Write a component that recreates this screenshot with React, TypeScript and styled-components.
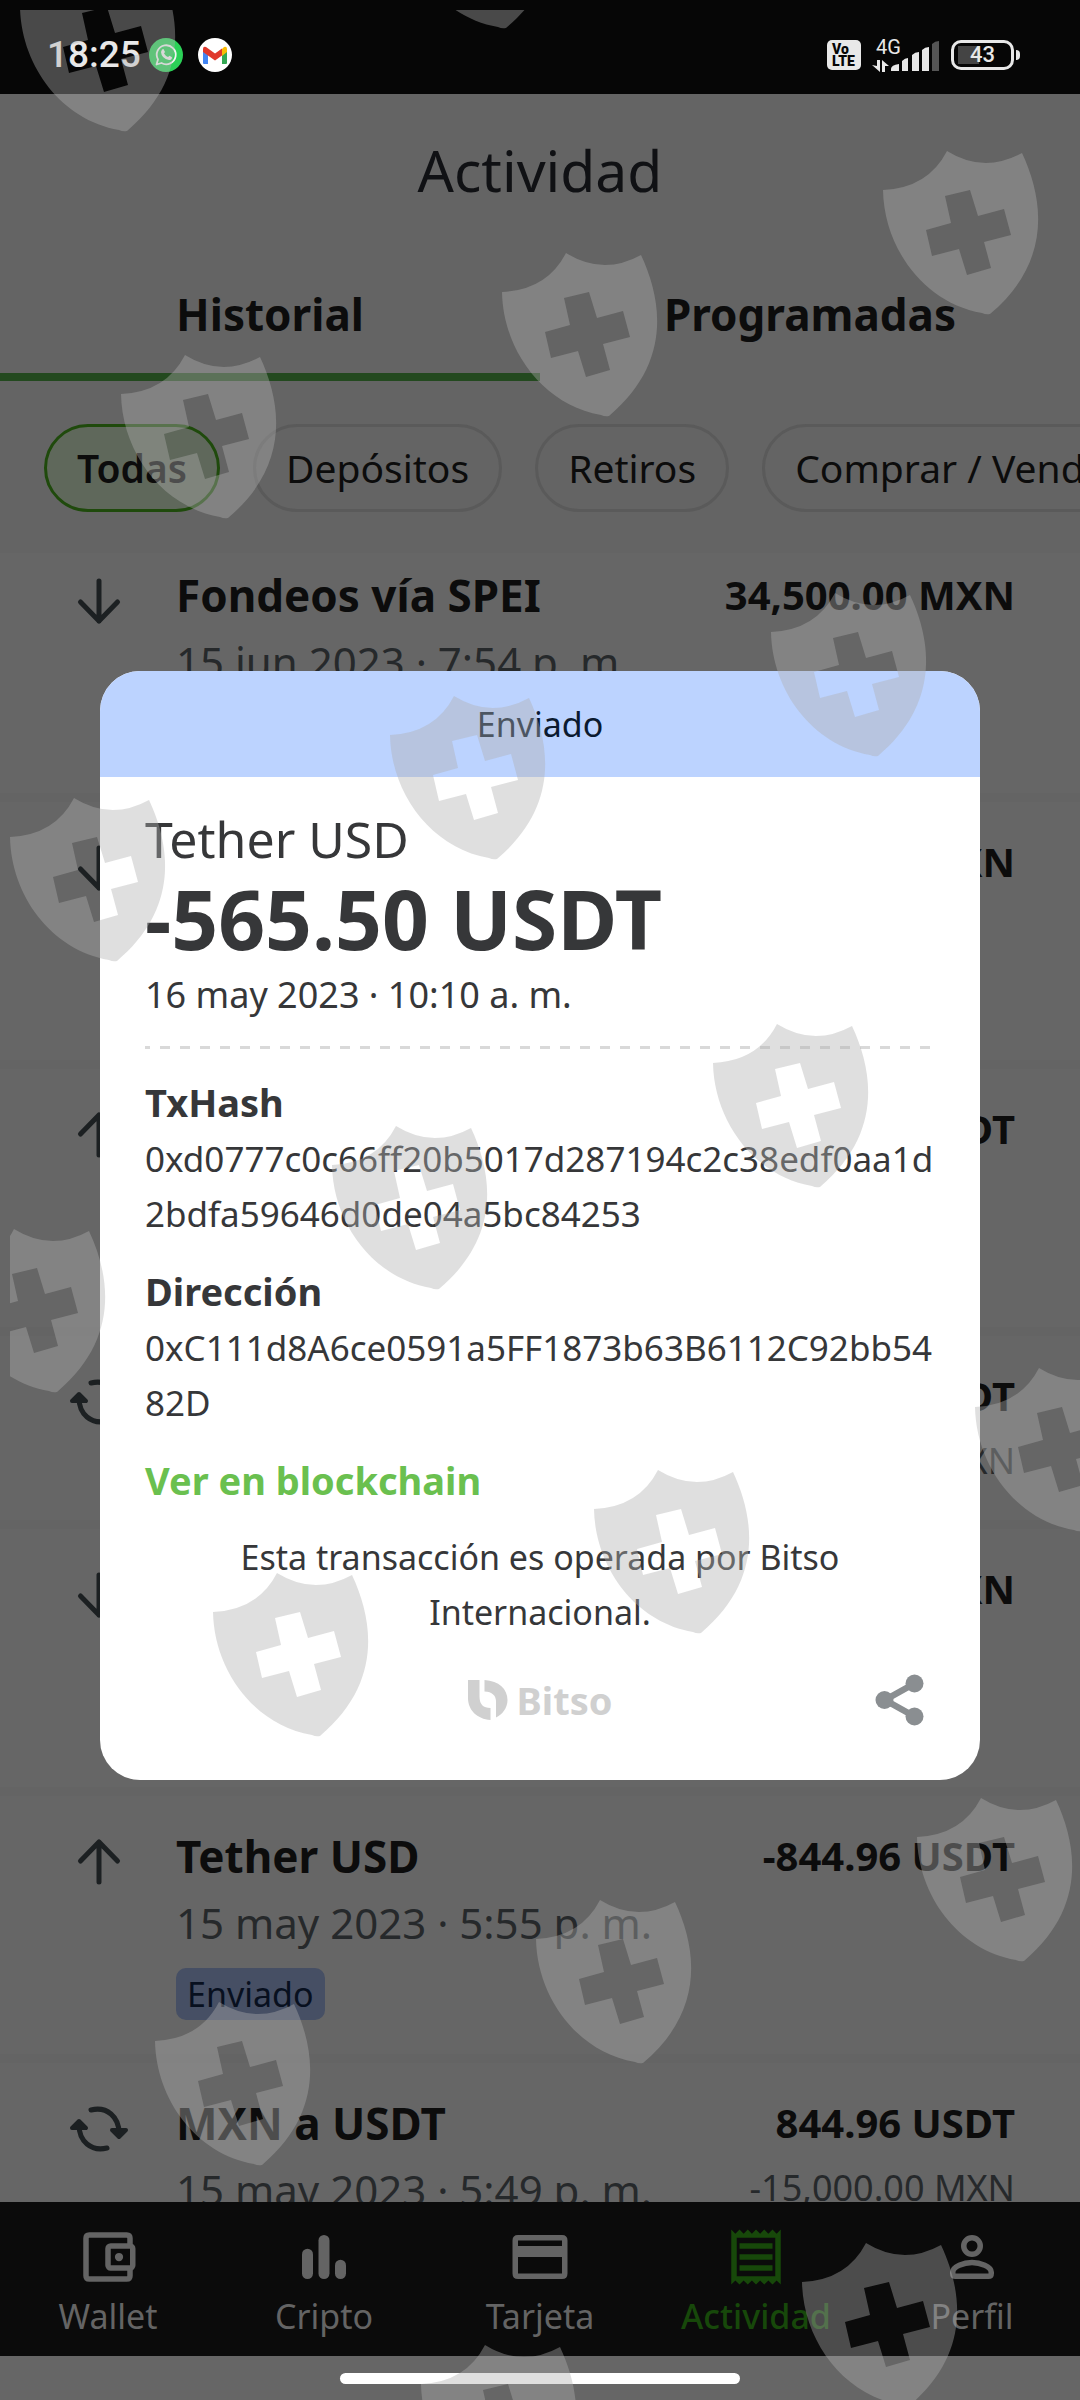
import React from "react";
import styled, { createGlobalStyle } from "styled-components";

const Global = createGlobalStyle`
  *, *::before, *::after { box-sizing: border-box; }
  body { margin: 0; background: #666; font-family: "Noto Sans", "Open Sans", sans-serif; }
  button { font: inherit; color: inherit; background: none; border: 0; padding: 0; margin: 0; }
  ul, dl, dd, p, h1, h2 { margin: 0; padding: 0; list-style: none; }
`;

const Screen = styled.div`
  position: relative;
  display: flex;
  flex-direction: column;
  height: 100vh;
  overflow: hidden;
  background: #666;
  color: #0c0c0c;
`;

const StatusBar = styled.header`
  display: flex;
  align-items: center;
  justify-content: space-between;
  flex: none;
  height: 94px;
  padding: 16px 60px 0 47px;
  background: #060606;
  color: #e8e8e8;
  font-family: Roboto, sans-serif;
`;

const StatusGroup = styled.div<{ $gap: number }>`
  display: flex;
  align-items: center;
  gap: ${(p) => p.$gap}px;
`;

const Clock = styled.time`
  font-size: 37px;
  font-weight: 500;
  line-height: 40px;
`;

const VolteBadge = styled.span`
  display: grid;
  align-content: center;
  width: 34px;
  height: 30px;
  padding-left: 5px;
  border-radius: 5px;
  background: #e8e8e8;
  color: #060606;
  font-size: 14px;
  font-weight: 900;
  line-height: 12px;
`;

const Network = styled.span`
  display: grid;
  grid-template-columns: 18px 50px;
  align-items: end;
  height: 36px;
`;

const NetworkLabel = styled.span`
  grid-column: 1 / 3;
  grid-row: 1;
  align-self: start;
  padding-left: 4px;
  font-size: 20px;
  line-height: 20px;
`;

const NetworkDrawing = styled.svg`
  grid-column: 1 / 3;
  grid-row: 1;
  width: 68px;
  height: 32px;
`;

const Battery = styled.span`
  position: relative;
  display: grid;
  place-items: center;
  width: 63px;
  height: 30px;
  margin-right: 6px;
  border: 3px solid #e8e8e8;
  border-radius: 10px;
  font-size: 22px;
  font-weight: 500;
  line-height: 22px;
  background: linear-gradient(#444, #444) 4px 3px / 21px 18px no-repeat;

  &::after {
    content: "";
    position: absolute;
    left: 62px;
    top: 7px;
    width: 4px;
    height: 10px;
    border-radius: 0 4px 4px 0;
    background: #e8e8e8;
  }
`;

const TopPane = styled.div`
  flex: none;
  background: #646464;
`;

const PageTitle = styled.h1`
  font-size: 57px;
  font-weight: 400;
  line-height: 152px;
  text-align: center;
  color: #101114;
`;

const Tabs = styled.div`
  display: grid;
  grid-template-columns: 1fr 1fr;
`;

const Tab = styled.button<{ $active?: boolean }>`
  height: 135px;
  padding-top: 8px;
  border-bottom: 8px solid ${(p) => (p.$active ? "#23491f" : "transparent")};
  font-size: 44px;
  font-weight: 700;
`;

const Chips = styled.div`
  display: flex;
  gap: 33px;
  padding: 43px 0 41px 44px;
  overflow: hidden;
`;

const Chip = styled.button<{ $active?: boolean }>`
  flex: none;
  height: 88px;
  padding: 0 30px 2px;
  border: 3px solid ${(p) => (p.$active ? "#1f4a0c" : "#5a5a5a")};
  border-radius: 44px;
  background: ${(p) => (p.$active ? "#5f685b" : "transparent")};
  font-size: 39px;
  font-weight: ${(p) => (p.$active ? 600 : 400)};
`;

const ListViewport = styled.main`
  flex: 1;
  min-height: 0;
  overflow: hidden;
`;

const List = styled.ul`
  margin-top: -18px;
`;

const Row = styled.li<{ $tall?: boolean }>`
  display: grid;
  grid-template-columns: 60px 1fr auto;
  column-gap: 47px;
  align-content: start;
  min-height: ${(p) => (p.$tall ? 267 : 193)}px;
  padding: 33px 65px 30px 69px;
  border-bottom: 9px solid #646464;
`;

const RowIcon = styled.svg`
  width: 60px;
  height: 60px;
  margin-top: 3px;
  fill: none;
  stroke: #1c2022;
  stroke-width: 5;
  stroke-linecap: round;
  stroke-linejoin: round;
`;

const RowTitle = styled.h2`
  font-size: 44px;
  font-weight: 700;
  line-height: 54px;
`;

const RowDate = styled.p`
  margin-top: 13px;
  font-size: 42px;
  line-height: 54px;
  color: #26292b;
`;

const Tag = styled.span`
  display: inline-block;
  margin-top: 18px;
  padding: 0 11px;
  border-radius: 10px;
  background: #464f64;
  color: #08101f;
  font-size: 34px;
  line-height: 52px;
`;

const Amounts = styled.div`
  text-align: right;
`;

const Amount = styled.p`
  font-size: 40px;
  font-weight: 700;
  line-height: 54px;
`;

const SubAmount = styled.p`
  margin-top: 13px;
  font-size: 36px;
  line-height: 50px;
  color: #26292b;
`;

const Nav = styled.nav`
  display: grid;
  grid-template-columns: repeat(5, 1fr);
  flex: none;
  height: 154px;
  background: #0b0b0b;
`;

const NavItem = styled.a<{ $active?: boolean }>`
  display: flex;
  flex-direction: column;
  align-items: center;
  padding-top: 22px;
  color: ${(p) => (p.$active ? "#17480a" : "#646464")};
  font-size: 34px;
  font-weight: ${(p) => (p.$active ? 500 : 400)};
  line-height: 52px;
  text-decoration: none;

  svg {
    width: 66px;
    height: 66px;
  }
`;

const GestureArea = styled.div`
  display: flex;
  justify-content: center;
  flex: none;
  height: 44px;
  padding-top: 17px;
`;

const GestureBar = styled.span`
  width: 37%;
  height: 11px;
  border-radius: 6px;
  background: #fff;
`;

const Overlay = styled.div`
  position: absolute;
  inset: 94px 0 44px;
  display: flex;
  flex-direction: column;
  justify-content: center;
  padding: 0 100px;
`;

const Dialog = styled.section`
  overflow: hidden;
  border-radius: 40px;
  background: #fff;
  color: #363739;
`;

const DialogStatus = styled.p`
  background: #bcd3ff;
  color: #0b1a30;
  font-size: 34px;
  line-height: 106px;
  text-align: center;
`;

const DialogBody = styled.div`
  padding: 32px 45px 50px;
`;

const Asset = styled.h2`
  font-size: 50px;
  font-weight: 400;
  line-height: 60px;
`;

const Total = styled.p`
  font-size: 82px;
  font-weight: 700;
  line-height: 98px;
`;

const Small = styled.p<{ $center?: boolean }>`
  font-size: ${(p) => (p.$center ? 34 : 36)}px;
  line-height: 55px;
  text-align: ${(p) => (p.$center ? "center" : "left")};
`;

const Dashes = styled.div`
  height: 3px;
  margin: 24px 0 20px;
  background: repeating-linear-gradient(90deg, #d9d9d9 0 5px, transparent 5px 15px, #d9d9d9 15px 20px);
`;

const Term = styled.dt`
  padding: 6px 0 2px;
  font-size: 38px;
  font-weight: 700;
  line-height: 54px;
`;

const Value = styled.dd`
  margin-bottom: 17px;
  font-size: 35px;
  line-height: 55px;
  word-break: break-all;
`;

const ChainLink = styled.a`
  display: block;
  margin: 20px 0;
  color: #6ac04f;
  font-size: 38px;
  font-weight: 700;
  line-height: 60px;
  text-decoration: none;
`;

const DialogFooter = styled.div`
  display: grid;
  grid-template-columns: 1fr auto 1fr;
  align-items: center;
  margin-top: 30px;
`;

const Brand = styled.div`
  grid-column: 2;
  display: flex;
  align-items: center;
  gap: 9px;
  color: #d0d0d0;
  font-size: 38px;
  font-weight: 700;
  line-height: 60px;
`;

const ShareButton = styled.button`
  justify-self: end;
  width: 60px;
  height: 60px;
`;

const Watermark = styled.svg`
  position: absolute;
  inset: 10px 0 0 10px;
  width: calc(100% - 10px);
  height: calc(100% - 10px);
  overflow: hidden;
  pointer-events: none;
`;

const shieldSpots: [number, number][] = [
  [19, -33], [398, -136], [882, 150], [501, 252], [120, 354],
  [770, 592], [389, 695], [9, 797], [712, 1023], [331, 1125], [-51, 1228],
  [974, 1367], [593, 1469], [212, 1572], [916, 1797], [535, 1899],
  [154, 2001], [801, 2242], [420, 2344],
];

const SHIELD =
  "M65 1Q102 24 140 3C162 50 170 112 108 164Q104 165 100 163C42 153 2 98 1 40Q46 38 65 1Z" +
  "M63 46L88 40L96 66L122 59L129 85L102 92L109 118L85 125L77 99L50 106L44 80L69 73Z";

type Kind = "down" | "up" | "swap";

function KindIcon({ kind }: { kind: Kind }) {
  return (
    <RowIcon viewBox="0 0 60 60" aria-hidden="true">
      {kind === "down" && <path d="M30 10V50M11.500 31L30 50L48.500 31" />}
      {kind === "up" && <path d="M30 50V10M11.500 29L30 10L48.500 29" />}
      {kind === "swap" && (
        <>
          <path d="M22 11C38 7 50 18 50 34M38 49C22 53 10 42 10 26" />
          <path d="M43 31L50 38L57 31ZM3 29L10 22L17 29Z" fill="#1c2022" strokeWidth="4" />
        </>
      )}
    </RowIcon>
  );
}

interface Movement {
  kind: Kind;
  title?: string;
  date?: string;
  tag?: string;
  amount: string;
  sub?: string;
  tall?: boolean;
}

const movements: Movement[] = [
  { kind: "down", title: "Fondeos vía SPEI", date: "15 jun 2023 · 7:54 p. m.", amount: "34,500.00 MXN", tall: true },
  { kind: "down", amount: "MXN", tall: true },
  { kind: "up", amount: "USDT", tall: true },
  { kind: "swap", amount: "USDT", sub: "MXN" },
  { kind: "down", amount: "MXN", tall: true },
  { kind: "up", title: "Tether USD", date: "15 may 2023 · 5:55 p. m.", tag: "Enviado", amount: "-844.96 USDT", tall: true },
  { kind: "swap", title: "MXN a USDT", date: "15 may 2023 · 5:49 p. m.", amount: "844.96 USDT", sub: "-15,000.00 MXN" },
];

const navItems = [
  {
    label: "Wallet",
    icon: (
      <>
        <path d="M20 8V5.200Q20 4 18.800 4H5.200Q4 4 4 5.200V18.800Q4 20 5.200 20H18.800Q20 20 20 18.800V16" fill="none" stroke="currentColor" strokeWidth="2" />
        <rect x="12" y="8" width="9" height="8" rx="1" fill="none" stroke="currentColor" strokeWidth="2" />
        <circle cx="16" cy="12" r="1.500" />
      </>
    ),
  },
  {
    label: "Cripto",
    icon: (
      <>
        <rect x="4" y="9" width="4" height="11" rx="2" />
        <rect x="10" y="4" width="4" height="16" rx="2" />
        <rect x="16" y="13" width="4" height="7" rx="2" />
      </>
    ),
  },
  {
    label: "Tarjeta",
    icon: <path fillRule="evenodd" d="M4 4H20Q22 4 22 6V18Q22 20 20 20H4Q2 20 2 18V6Q2 4 4 4ZM4 6V8H20V6ZM4 12V18H20V12Z" />,
  },
  {
    label: "Actividad",
    icon: (
      <>
        <path
          fillRule="evenodd"
          d="M3 2L4.500 3.500L6 2L7.500 3.500L9 2L10.500 3.500L12 2L13.500 3.500L15 2L16.500 3.500L18 2L19.500 3.500L21 2V22L19.500 20.500L18 22L16.500 20.500L15 22L13.500 20.500L12 22L10.500 20.500L9 22L7.500 20.500L6 22L4.500 20.500L3 22ZM5 5V19H19V5Z"
        />
        <path d="M6 7H18V9H6ZM6 11H18V13H6ZM6 15H18V17H6Z" />
      </>
    ),
  },
  {
    label: "Perfil",
    icon: (
      <g fill="none" stroke="currentColor" strokeWidth="2">
        <circle cx="12" cy="8" r="3" />
        <path d="M5 17.500C5 15.500 9 14 12 14S19 15.500 19 17.500V18Q19 19 18 19H6Q5 19 5 18Z" />
      </g>
    ),
  },
];

export default function App() {
  return (
    <Screen>
      <Global />
      <StatusBar>
        <StatusGroup $gap={8}>
          <Clock>18:25</Clock>
          <svg width="34" height="34" viewBox="0 0 34 34" aria-label="WhatsApp">
            <circle cx="17" cy="17" r="17" fill="#2bd157" />
            <path d="M7.500 26.500L9 21.500A9.500 9.500 0 1 1 12.500 25Z" fill="none" stroke="#f4f4f4" strokeWidth="1.800" strokeLinejoin="round" />
            <path d="M13 11.500L14.500 11L16 14L15 15.500Q16.500 18 19 19L20.500 17.800L23 19.200Q23 22 20 22Q12.500 20.500 12 14Z" fill="#f4f4f4" />
          </svg>
          <svg width="50" height="34" viewBox="0 0 50 34" aria-label="Gmail">
            <circle cx="24" cy="17" r="17" fill="#fff" />
            <path d="M12 13L17 17V26H13Q12 26 12 25Z" fill="#4285f4" />
            <path d="M36 13L31 17V26H35Q36 26 36 25Z" fill="#34a853" />
            <path d="M31 11L33 9Q36 8 36 11V14L31 18Z" fill="#fbbc04" />
            <path d="M12 14V11Q12 8 15 9L24 15.500L31 10.500V17.500L24 22.500Z" fill="#e0382c" />
          </svg>
        </StatusGroup>
        <StatusGroup $gap={11}>
          <VolteBadge>
            <span>Vo</span>
            <span>LTE</span>
          </VolteBadge>
          <Network>
            <NetworkLabel>4G</NetworkLabel>
            <NetworkDrawing viewBox="0 0 68 32" fill="#e8e8e8">
              <path d="M5 19H8V31L0 24L5 25ZM10 31V19L17 25H13V31Z" />
              <path d="M19 30V28Q19 24 27 23V30ZM30 30V20Q33 17 36 17V30ZM40 30V14Q43 11 47 11V30ZM50 30V9Q53 6 57 6V30Z" />
              <path d="M60 30V3Q63 0 67 0V30Z" fill="#555" />
            </NetworkDrawing>
          </Network>
          <Battery>43</Battery>
        </StatusGroup>
      </StatusBar>

      <TopPane>
        <PageTitle>Actividad</PageTitle>
        <Tabs role="tablist">
          <Tab role="tab" aria-selected="true" $active>Historial</Tab>
          <Tab role="tab" aria-selected="false">Programadas</Tab>
        </Tabs>
        <Chips>
          <Chip $active>Todas</Chip>
          <Chip>Depósitos</Chip>
          <Chip>Retiros</Chip>
          <Chip>Comprar / Vender</Chip>
        </Chips>
      </TopPane>

      <ListViewport>
        <List>
          {movements.map((m, i) => (
            <Row key={i} $tall={m.tall}>
              <KindIcon kind={m.kind} />
              <div>
                {m.title && <RowTitle>{m.title}</RowTitle>}
                {m.date && <RowDate>{m.date}</RowDate>}
                {m.tag && <Tag>{m.tag}</Tag>}
              </div>
              <Amounts>
                <Amount>{m.amount}</Amount>
                {m.sub && <SubAmount>{m.sub}</SubAmount>}
              </Amounts>
            </Row>
          ))}
        </List>
      </ListViewport>

      <Nav>
        {navItems.map((n) => (
          <NavItem key={n.label} href="#" $active={n.label === "Actividad"}>
            <svg viewBox="0 0 24 24" fill="currentColor" aria-hidden="true">{n.icon}</svg>
            {n.label}
          </NavItem>
        ))}
      </Nav>
      <GestureArea>
        <GestureBar />
      </GestureArea>

      <Overlay>
        <Dialog role="dialog" aria-label="Enviado">
          <DialogStatus>Enviado</DialogStatus>
          <DialogBody>
            <Asset>Tether USD</Asset>
            <Total>-565.50 USDT</Total>
            <Small>16 may 2023 · 10:10 a. m.</Small>
            <Dashes />
            <dl>
              <Term>TxHash</Term>
              <Value>0xd0777c0c66ff20b5017d287194c2c38edf0aa1d2bdfa59646d0de04a5bc84253</Value>
              <Term>Dirección</Term>
              <Value>0xC111d8A6ce0591a5FF1873b63B6112C92bb5482D</Value>
            </dl>
            <ChainLink href="#">Ver en blockchain</ChainLink>
            <Small $center>Esta transacción es operada por Bitso Internacional.</Small>
            <DialogFooter>
              <Brand>
                <svg width="40" height="40" viewBox="0 0 40 40" fill="currentColor" aria-hidden="true">
                  <path d="M0 0H11.500V16.500Q11.500 28 22.500 28V40C9 39 0 30 0 18Z" />
                  <path d="M16.500 0C31 1 39.500 9 39.500 20C39.500 28 34 35 28 37.500V22Q28 12 16.500 11.500Z" />
                </svg>
                Bitso
              </Brand>
              <ShareButton aria-label="Compartir">
                <svg width="60" height="60" viewBox="0 0 60 60" fill="#8a8e91">
                  <path d="M39.500 13.500L10 30L39.500 46.500" fill="none" stroke="#8a8e91" strokeWidth="6.500" />
                  <circle cx="39.500" cy="13.500" r="9" />
                  <circle cx="9.500" cy="30" r="9" />
                  <circle cx="39.500" cy="46.500" r="9" />
                </svg>
              </ShareButton>
            </DialogFooter>
          </DialogBody>
        </Dialog>
      </Overlay>

      <Watermark fill="#b0b0b0" fillOpacity="0.4" aria-hidden="true">
        {shieldSpots.map(([x, y]) => (
          <path key={`${x},${y}`} d={SHIELD} fillRule="evenodd" transform={`translate(${x - 10} ${y - 10})`} />
        ))}
      </Watermark>
    </Screen>
  );
}
